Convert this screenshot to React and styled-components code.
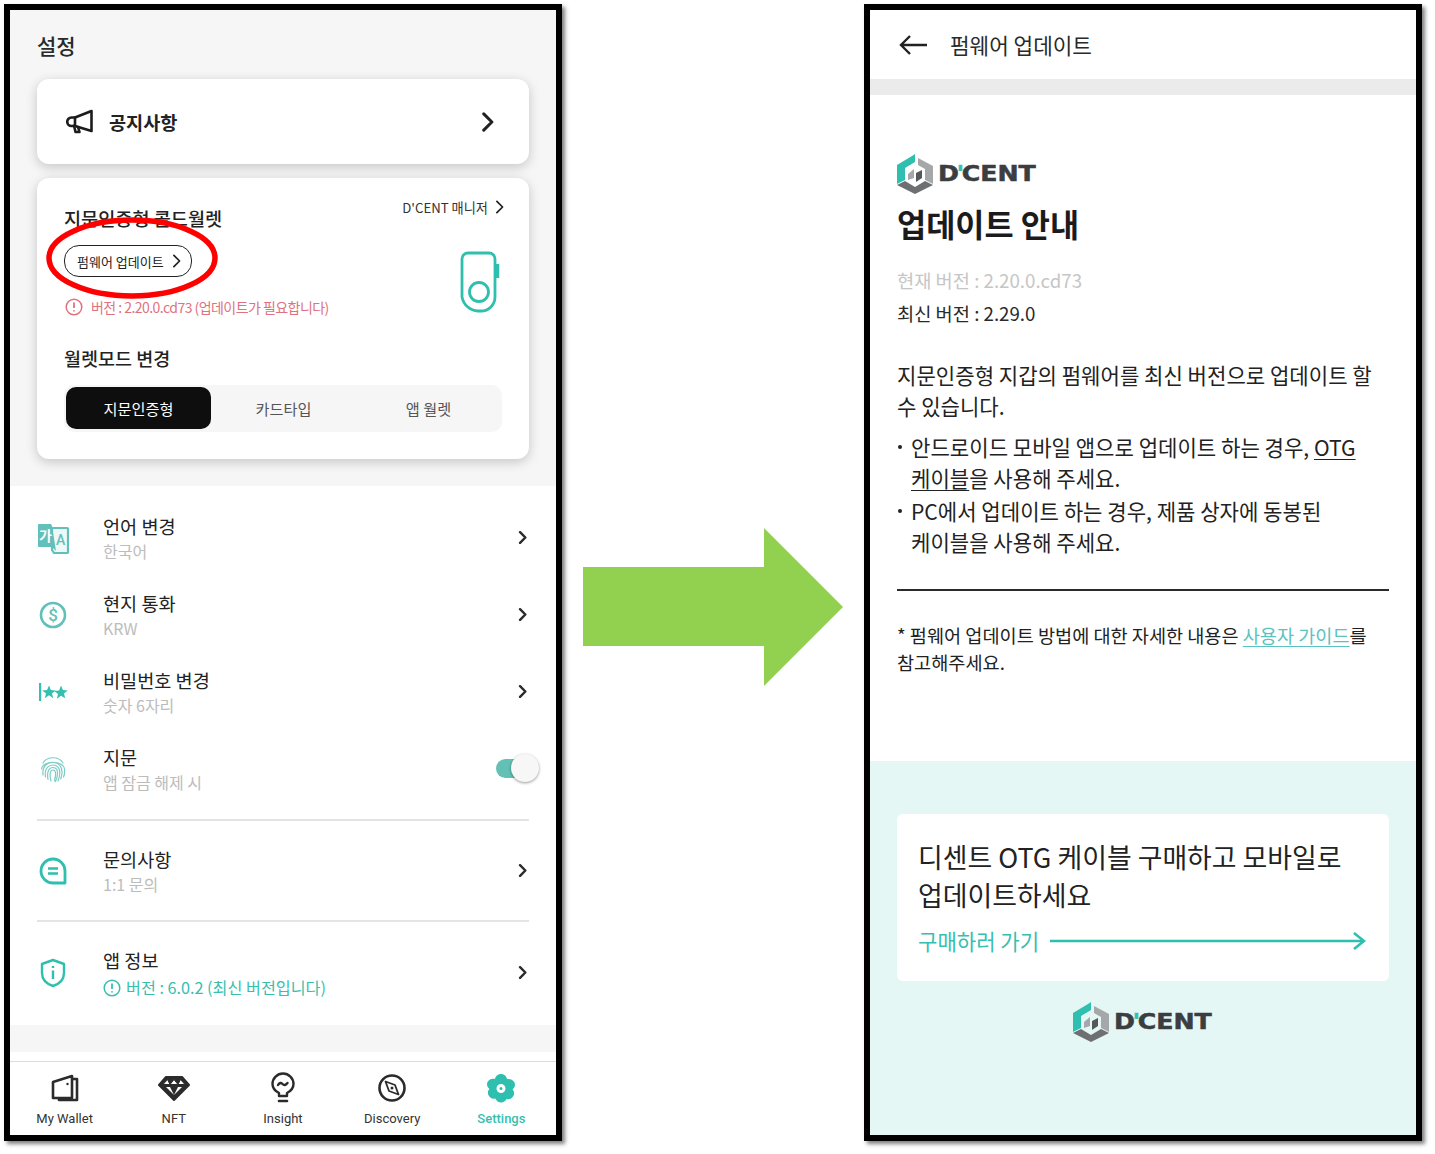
import React from "react";
import styled, { createGlobalStyle } from "styled-components";

const Global = createGlobalStyle`
  html, body { margin: 0; padding: 0; background: #fff; }
  body { font-family: "Noto Sans CJK KR", "Noto Sans", sans-serif; color: #1c1c1c; word-break: keep-all; }
  * { box-sizing: border-box; }
`;

const Page = styled.div`
  width: 1435px;
  height: 1154px;
  padding: 4px 0 0 4px;
  display: flex;
  align-items: flex-start;
  overflow: hidden;
`;

const Phone = styled.div`
  position: relative;
  width: 558px;
  height: 1137px;
  border: 6px solid #000;
  box-shadow: 3px 3px 4px rgba(0, 0, 0, 0.5);
  background: #fff;
  display: flex;
  flex-direction: column;
`;

const ArrowWrap = styled.div`
  width: 302px;
  padding: 524px 0 0 21px;
  svg { display: block; }
`;

/* left phone */
const TopArea = styled.div`
  height: 476px;
  background: #f6f6f6;
  padding: 0 27px;
  display: flex;
  flex-direction: column;
`;

const ScreenTitle = styled.div`
  height: 69px;
  padding: 20px 0 0 0;
  font-size: 21px;
  line-height: 30px;
  font-weight: 500;
  color: #2a2a2a;
`;

const Card = styled.div`
  background: #fff;
  border-radius: 12px;
  box-shadow: 0 3px 12px rgba(0, 0, 0, 0.2);
`;

const NoticeCard = styled(Card)`
  height: 85px;
  display: flex;
  align-items: center;
  padding: 0 35px 0 29px;
  margin-bottom: 14px;
`;

const NoticeLabel = styled.div`
  flex: 1;
  margin-left: 15px;
  font-size: 18.6px;
  font-weight: 700;
  color: #222;
`;

const WalletCard = styled(Card)`
  height: 281px;
  padding: 0 27px;
  display: flex;
  flex-direction: column;
`;

const WalletTop = styled.div`
  display: flex;
  justify-content: space-between;
  height: 69px;
`;

const WalletTitle = styled.div`
  font-size: 18.6px;
  line-height: 28px;
  font-weight: 500;
  padding-top: 26px;
  color: #222;
`;

const ManagerLink = styled.div`
  display: flex;
  align-items: center;
  gap: 7px;
  height: 20px;
  margin: 19px -2px 0 0;
  font-size: 13.2px;
  color: #333;
`;

const WalletMiddle = styled.div`
  display: flex;
  justify-content: space-between;
  height: 98px;
`;

const UpdateButton = styled.div`
  display: inline-flex;
  align-items: center;
  justify-content: space-between;
  width: 128px;
  height: 32px;
  padding: 0 10px 0 12px;
  border: 1.5px solid #222;
  border-radius: 15px;
  font-size: 13px;
  color: #222;
  background: #fff;
  margin-top: -2px;
`;

const Warning = styled.div`
  display: flex;
  align-items: center;
  gap: 8px;
  margin: 20px 0 0 1px;
  font-size: 14px;
  line-height: 20px;
  letter-spacing: -0.55px;
  color: #e0727f;
`;

const DeviceIcon = styled.svg`
  display: block;
  margin: 4px 1px 0 0;
`;

const ModeTitle = styled.div`
  font-size: 18.5px;
  line-height: 26px;
  font-weight: 500;
  color: #222;
`;

const ModeBar = styled.div`
  display: grid;
  grid-template-columns: repeat(3, 145px);
  width: 438px;
  height: 47px;
  margin-top: 14px;
  padding: 2px;
  background: #f6f6f6;
  border-radius: 10px;
`;

const ModeItem = styled.div`
  height: 42px;
  display: flex;
  align-items: center;
  justify-content: center;
  font-size: 15.2px;
  border-radius: 10px;
  color: ${(p) => (p.$active ? "#fff" : "#555")};
  background: ${(p) => (p.$active ? "#0e0e0e" : "transparent")};
`;

const RedRing = styled.svg`
  position: absolute;
  left: 36px;
  top: 207px;
  pointer-events: none;
`;

const List = styled.div`
  height: 539px;
  padding: 13px 27px 0 27px;
`;

const Row = styled.div`
  height: 77px;
  display: flex;
  align-items: center;
  margin-top: ${(p) => p.$gap || 0}px;
`;

const RowIcon = styled.div`
  width: 32px;
  height: 32px;
  display: flex;
  align-items: center;
  justify-content: center;
  margin-right: 34px;
`;

const RowText = styled.div`
  flex: 1;
  padding-top: 2px;
`;

const RowTitle = styled.div`
  font-size: 18.6px;
  line-height: 26px;
  color: #222;
`;

const RowSub = styled.div`
  display: flex;
  align-items: center;
  gap: 5px;
  margin-top: ${(p) => (p.$teal ? "2px" : "0")};
  font-size: ${(p) => (p.$teal ? "16.2px" : "16px")};
  line-height: 25px;
  color: ${(p) => (p.$teal ? "#36bfb0" : "#bcbcbc")};
`;

const RowArrow = styled.div`
  margin-right: 2px;
  display: flex;
`;

const Divider = styled.div`
  height: 2px;
  background: #e4e4e4;
  margin-top: ${(p) => p.$gap}px;
`;

const Toggle = styled.div`
  position: relative;
  width: 24px;
  height: 19px;
  margin: 0 9px 0 0;
  border-radius: 10px 0 0 10px;
  background: #62c0b5;
`;

const Knob = styled.div`
  position: absolute;
  left: 15px;
  top: -5px;
  width: 28px;
  height: 28px;
  border-radius: 50%;
  background: #f7f7f7;
  box-shadow: 0 1px 3px rgba(0, 0, 0, 0.4);
`;

const GrayGap = styled.div`
  height: 27px;
  background: #f6f6f6;
`;

const TabBar = styled.div`
  margin-top: 9px;
  border-top: 1px solid #dcdcdc;
  flex: 1;
  display: grid;
  grid-template-columns: repeat(5, 1fr);
`;

const Tab = styled.div`
  display: flex;
  flex-direction: column;
  align-items: center;
  padding-top: 10px;
  font-family: Roboto, "Liberation Sans", sans-serif;
  font-size: 13px;
  font-weight: ${(p) => (p.$active ? 500 : 400)};
  color: ${(p) => (p.$active ? "#36bfb0" : "#333")};
  svg { display: block; }
`;

const TabIcon = styled.div`
  height: 32px;
  display: flex;
  align-items: center;
`;

const TabLabel = styled.span`
  margin-top: 7px;
  line-height: 16px;
`;

/* right phone */
const AppBar = styled.div`
  height: 69px;
  display: flex;
  align-items: center;
  padding-left: 28px;
  gap: 22px;
  font-size: 21.3px;
  color: #2a2a2a;
`;

const Band = styled.div`
  height: 16px;
  background: #ebebeb;
`;

const Content = styled.div`
  height: 666px;
  padding: 59px 27px 0 27px;
`;

const LogoRow = styled.div`
  display: flex;
  align-items: center;
  justify-content: ${(p) => (p.$center ? "center" : "flex-start")};
  gap: 5px;
`;

const LogoText = styled.div`
  width: 99px;
  font-family: "DejaVu Sans", sans-serif;
  font-weight: 700;
  font-size: 20.5px;
  line-height: 24px;
  white-space: nowrap;
  color: #3b3e41;
  -webkit-text-stroke: 0.5px #3b3e41;
  transform: scaleX(1.23);
  transform-origin: left center;
  i { font-style: normal; color: #36bfb0; -webkit-text-stroke: 0.5px #36bfb0; margin: 0 -2px; }
`;

const MainTitle = styled.h1`
  margin: 6px 0 0 0;
  font-size: 31.7px;
  line-height: 46px;
  font-weight: 700;
  color: #1b1b1b;
`;

const Version = styled.div`
  font-size: 18.7px;
  line-height: 33px;
  color: ${(p) => (p.$muted ? "#c6c6c6" : "#2a2a2a")};
  margin-top: ${(p) => p.$gap || 0}px;
`;

const Para = styled.p`
  margin: 31px 0 10px 0;
  font-size: 21.1px;
  line-height: 31px;
  color: #222;
  width: 480px;
`;

const Bullets = styled.ul`
  margin: 0;
  padding: 0;
  list-style: none;
`;

const Bullet = styled.li`
  position: relative;
  padding-left: 14px;
  font-size: 21.1px;
  line-height: 31px;
  color: #222;
  margin-bottom: 2px;
  width: 470px;
  &::before {
    content: "";
    position: absolute;
    left: 1px;
    top: 13px;
    width: 4px;
    height: 4px;
    border-radius: 50%;
    background: #222;
  }
  u { text-underline-offset: 3px; text-decoration-thickness: 1px; }
`;

const Rule = styled.div`
  height: 2px;
  background: #2b2b2b;
  margin-top: 31px;
`;

const Note = styled.p`
  margin: 30px 0 0 0;
  font-size: 18.6px;
  line-height: 27px;
  color: #222;
  a { color: #5cc2c0; text-decoration: underline; text-underline-offset: 3px; text-decoration-thickness: 1px; }
`;

const Promo = styled.div`
  flex: 1;
  background: #e5f7f5;
  padding: 53px 27px 0 27px;
`;

const PromoCard = styled.div`
  height: 167px;
  background: #fff;
  border-radius: 6px;
  padding: 24px 21px 0 21px;
`;

const PromoText = styled.div`
  font-size: 26.9px;
  line-height: 38px;
  color: #222;
`;

const BuyRow = styled.div`
  display: flex;
  align-items: center;
  gap: 11px;
  margin-top: 12px;
  font-size: 21.1px;
  line-height: 30px;
  color: #36bfb0;
  svg { display: block; }
`;

const LogoFoot = styled.div`
  margin-top: 21px;
`;

const Chevron = ({ size = 12, weight = 2, color = "#222", height }) => (
  <svg width={size} height={height || size * 1.6} viewBox="0 0 10 16" fill="none">
    <path d="M2 1.5 8.5 8 2 14.5" stroke={color} strokeWidth={weight} strokeLinecap="round" strokeLinejoin="round" />
  </svg>
);

const Megaphone = () => (
  <svg width="28" height="26" viewBox="0 0 28 26" fill="none" stroke="#1c1c1c" strokeWidth="2.6" strokeLinejoin="round" strokeLinecap="round">
    <path d="M25.5 2 9 8.5H5.5a4 4 0 0 0 0 8.500H9L25.500 22Z" />
    <path d="M9 8.500v8M8 16.500l1.500 6.500h4l-1.500-5" />
  </svg>
);

const AlertCircle = ({ color, size = 18 }) => (
  <svg width={size} height={size} viewBox="0 0 18 18" fill="none" style={{ flex: "none" }}>
    <circle cx="9" cy="9" r="7.800" stroke={color} strokeWidth="1.500" />
    <path d="M9 4.500v5.500M9 12.300v1.200" stroke={color} strokeWidth="1.800" />
  </svg>
);

const Device = () => (
  <DeviceIcon width="42" height="62" viewBox="0 0 42 62" fill="none" stroke="#2fbfae" strokeWidth="2.800">
    <path d="M9 2h21a6 6 0 0 1 6 6v38a14 14 0 0 1-14 14h-3A17 17 0 0 1 3 46V8a6 6 0 0 1 6-6Z" />
    <circle cx="20" cy="41" r="9.500" />
    <path d="M38.500 13v14" strokeWidth="3.500" />
  </DeviceIcon>
);

const LangIcon = () => (
  <svg width="32" height="32" viewBox="0 0 32 32">
    <path d="M15 6h15a1 1 0 0 1 1 1v23a1 1 0 0 1-1 1H17l-2-3Z" fill="#eef8f7" stroke="#62c0bb" strokeWidth="2.200" />
    <path d="M1 3a1 1 0 0 1 1-1h12l1 2 4 25-4-4H2a1 1 0 0 1-1-1Z" fill="#62c0bb" />
    <text x="2" y="19" fontSize="14" fontWeight="700" fill="#fff" fontFamily="Noto Sans CJK KR">가</text>
    <text x="19" y="23" fontSize="14" fontWeight="500" fill="#62c0bb" fontFamily="Roboto">A</text>
  </svg>
);

const DollarIcon = () => (
  <svg width="28" height="28" viewBox="0 0 28 28" fill="none">
    <circle cx="14" cy="14" r="12" stroke="#62c0bb" strokeWidth="2.600" />
    <text x="14" y="20" textAnchor="middle" fontSize="17" fontWeight="500" fill="#62c0bb" fontFamily="Roboto">$</text>
  </svg>
);

const PinIcon = () => (
  <svg width="30" height="20" viewBox="0 0 30 20">
    <rect x="1" y="1" width="2.200" height="18" fill="#36bfb0" />
    <path fill="#36bfb0" d="M11 3.500l1.900 4.500 4.800.4-3.700 3.100 1.200 4.700L11 13.200l-4.200 3 1.200-4.700-3.700-3.100 4.800-.4ZM23 3.500l1.900 4.500 4.800.4-3.700 3.100 1.200 4.700-4.200-2.500-4.200 3 1.200-4.700-3.700-3.100 4.800-.4Z" />
  </svg>
);

const FingerIcon = () => (
  <svg width="26" height="28" viewBox="0 0 26 28" fill="none" stroke="#7cccc6" strokeWidth="1.200" strokeLinecap="round">
    <path d="M3 8C7 1 19 1 23 8" />
    <path d="M1.500 14C3 5 23 5 24.500 14c.4 3 0 6-1 8" />
    <path d="M3 20C2 10 8 7.500 13 7.500S22.500 11 22 18c-.2 2-.6 4-1.300 6" />
    <path d="M5.500 22C4 13 9 10 13 10s7 3 6.800 8c-.1 3-.7 5-1.800 8" />
    <path d="M8 24.500C6.500 16 9.500 12.500 13 12.500s4.800 3 4.500 6.500c-.2 2.500-.8 5-2 7.500" />
    <path d="M11 26c-1.500-5-1.500-11 2-11s3 5 1.500 11" />
  </svg>
);

const ChatIcon = () => (
  <svg width="28" height="28" viewBox="0 0 28 28" fill="none" stroke="#2fbfae">
    <path d="M14 2a12 12 0 0 1 12 12v12H14A12 12 0 0 1 14 2Z" strokeWidth="2.800" strokeLinejoin="round" />
    <path d="M9 11.500h10M9 16.500h10" strokeWidth="2.600" />
  </svg>
);

const ShieldIcon = () => (
  <svg width="26" height="30" viewBox="0 0 26 30" fill="none" stroke="#2fbfae">
    <path d="M13 2 24 6v9c0 7-5 11-11 13C7 26 2 22 2 15V6Z" strokeWidth="2.400" strokeLinejoin="round" />
    <path d="M13 12.500V21" strokeWidth="2.400" />
    <path d="M13 8v2" strokeWidth="2.400" />
  </svg>
);

const WalletIcon = () => (
  <svg width="30" height="30" viewBox="0 0 30 30" fill="none" stroke="#2b2b2b" strokeWidth="2.600" strokeLinejoin="round">
    <path d="M3 9 22 3v22H3Z" />
    <path d="M22 6h5v21H9v-2" />
    <circle cx="17.500" cy="11" r="1.200" fill="#2b2b2b" stroke="none" />
  </svg>
);

const GemIcon = () => (
  <svg width="32" height="30" viewBox="0 0 32 30" fill="none" stroke="#2b2b2b" strokeWidth="2" strokeLinejoin="round">
    <path d="M8 4h16l7 8-15 15L1 12Z" fill="#2b2b2b" />
    <path d="M5 11.500 9.500 6.500 12 11.500 16 6.500 20 11.500 22.500 6.500 27 11.500Z" fill="#fff" stroke="#2b2b2b" strokeWidth="1" />
    <path d="M8 14h4l4 8Zm16 0h-4l-4 8Z" fill="#fff" stroke="none" />
  </svg>
);

const BulbIcon = () => (
  <svg width="30" height="32" viewBox="0 0 30 32" fill="none" stroke="#2b2b2b" strokeWidth="2.400" strokeLinecap="round">
    <path d="M11 24v-3C7 19 4.500 16 4.500 12a10.500 10.500 0 0 1 21 0c0 4-2.500 7-6.500 9v3Z" strokeLinejoin="round" />
    <path d="M11 29h8" strokeWidth="2.600" />
    <path d="M10 13c1.500-2.500 3-2.500 4.500-1s3 1.500 5-1" />
  </svg>
);

const CompassIcon = () => (
  <svg width="30" height="30" viewBox="0 0 30 30" fill="none" stroke="#2b2b2b" strokeWidth="2.600">
    <circle cx="15" cy="15" r="12.500" />
    <path d="M8.500 8.500 18 12l3.500 9.500L12 18Z" strokeWidth="1.800" strokeLinejoin="round" />
    <circle cx="15" cy="15" r="1.500" fill="#2b2b2b" stroke="none" />
  </svg>
);

const GearIcon = () => (
  <svg width="30" height="30" viewBox="0 0 30 30">
    <path
      fill="#2fbfae"
      fillRule="evenodd"
      d="M15 1c3.500 0 5.500 2.500 6 5 2.500-.5 6 .5 7.500 3.500 1.300 3-.2 5.500-2 7 1.800 1.500 2.300 4.500.5 7-1.800 2.800-4.500 3-6.500 2.500C19.500 28 17.500 29.500 15 29.500S10.500 28 9.500 25.500C7.500 26 4.800 25.800 3 23c-1.800-2.500-1.300-5.500.5-7-1.800-1.500-3.300-4-2-7C3 6 6.500 5 9 6c.5-2.500 2.500-5 6-5ZM15 11a4.500 4.500 0 1 0 0 9 4.500 4.500 0 0 0 0-9Zm0 3a1.500 1.500 0 1 1 0 3 1.500 1.500 0 0 1 0-3Z"
    />
  </svg>
);

const LogoMark = () => (
  <svg width="36" height="40" viewBox="0 0 36 40">
    <path d="M0 11 15 2l3-2v8L8 14v12l-8 4Z" fill="#2fbfae" />
    <path d="M21 4l15 8v18l-8-4V15l-7-4Z" fill="#a5a7a9" />
    <path d="M0 31l8-4 10 6 10-6 8 4-18 9Z" fill="#6d6f72" />
    <path d="M11 20l6-5v9l-6 2Z" fill="#a5a7a9" />
    <path d="M19 19l6-3v8l-6 4Z" fill="#55585b" />
  </svg>
);

const Logo = ({ center }) => (
  <LogoRow $center={center}>
    <LogoMark />
    <LogoText>D<i>'</i>CENT</LogoText>
  </LogoRow>
);

const settings = [
  { icon: <LangIcon />, title: "언어 변경", sub: "한국어" },
  { icon: <DollarIcon />, title: "현지 통화", sub: "KRW" },
  { icon: <PinIcon />, title: "비밀번호 변경", sub: "숫자 6자리" },
];

const tabs = [
  { icon: <WalletIcon />, label: "My Wallet" },
  { icon: <GemIcon />, label: "NFT" },
  { icon: <BulbIcon />, label: "Insight" },
  { icon: <CompassIcon />, label: "Discovery" },
  { icon: <GearIcon />, label: "Settings", active: true },
];

const RowChevron = () => (
  <RowArrow>
    <Chevron size={9} height={13} weight={3} color="#2b2b2b" />
  </RowArrow>
);

const SettingsScreen = () => (
  <Phone>
    <TopArea>
      <ScreenTitle>설정</ScreenTitle>
      <NoticeCard>
        <Megaphone />
        <NoticeLabel>공지사항</NoticeLabel>
        <Chevron size={13} height={20} weight={2.400} />
      </NoticeCard>
      <WalletCard>
        <WalletTop>
          <WalletTitle>지문인증형 콜드월렛</WalletTitle>
          <ManagerLink>
            D'CENT 매니저
            <Chevron size={9} height={14} weight={2} />
          </ManagerLink>
        </WalletTop>
        <WalletMiddle>
          <div>
            <UpdateButton>
              펌웨어 업데이트
              <Chevron size={9} height={14} weight={2} />
            </UpdateButton>
            <Warning>
              <AlertCircle color="#e0727f" />
              버전 : 2.20.0.cd73 (업데이트가 필요합니다)
            </Warning>
          </div>
          <Device />
        </WalletMiddle>
        <ModeTitle>월렛모드 변경</ModeTitle>
        <ModeBar>
          <ModeItem $active>지문인증형</ModeItem>
          <ModeItem>카드타입</ModeItem>
          <ModeItem>앱 월렛</ModeItem>
        </ModeBar>
      </WalletCard>
    </TopArea>
    <RedRing width="172" height="82" viewBox="0 0 172 82" fill="none">
      <ellipse cx="86" cy="41" rx="83" ry="38" stroke="#f00" strokeWidth="5.500" />
    </RedRing>
    <List>
      {settings.map((s) => (
        <Row key={s.title}>
          <RowIcon>{s.icon}</RowIcon>
          <RowText>
            <RowTitle>{s.title}</RowTitle>
            <RowSub>{s.sub}</RowSub>
          </RowText>
          <RowChevron />
        </Row>
      ))}
      <Row>
        <RowIcon><FingerIcon /></RowIcon>
        <RowText>
          <RowTitle>지문</RowTitle>
          <RowSub>앱 잠금 해제 시</RowSub>
        </RowText>
        <Toggle><Knob /></Toggle>
      </Row>
      <Divider $gap={12} />
      <Row $gap={11}>
        <RowIcon><ChatIcon /></RowIcon>
        <RowText>
          <RowTitle>문의사항</RowTitle>
          <RowSub>1:1 문의</RowSub>
        </RowText>
        <RowChevron />
      </Row>
      <Divider $gap={11} />
      <Row $gap={12}>
        <RowIcon><ShieldIcon /></RowIcon>
        <RowText>
          <RowTitle>앱 정보</RowTitle>
          <RowSub $teal>
            <AlertCircle color="#36bfb0" />
            버전 : 6.0.2 (최신 버전입니다)
          </RowSub>
        </RowText>
        <RowChevron />
      </Row>
    </List>
    <GrayGap />
    <TabBar>
      {tabs.map((t) => (
        <Tab key={t.label} $active={t.active}>
          <TabIcon>{t.icon}</TabIcon>
          <TabLabel>{t.label}</TabLabel>
        </Tab>
      ))}
    </TabBar>
  </Phone>
);

const UpdateScreen = () => (
  <Phone>
    <AppBar>
      <svg width="30" height="22" viewBox="0 0 30 22" fill="none" stroke="#222" strokeWidth="2.400">
        <path d="M29 11H3M12 2 3 11l9 9" />
      </svg>
      펌웨어 업데이트
    </AppBar>
    <Band />
    <Content>
      <Logo />
      <MainTitle>업데이트 안내</MainTitle>
      <Version $muted $gap={17}>현재 버전 : 2.20.0.cd73</Version>
      <Version>최신 버전 : 2.29.0</Version>
      <Para>지문인증형 지갑의 펌웨어를 최신 버전으로 업데이트 할 수 있습니다.</Para>
      <Bullets>
        <Bullet>안드로이드 모바일 앱으로 업데이트 하는 경우, <u>OTG 케이블</u>을 사용해 주세요.</Bullet>
        <Bullet>PC에서 업데이트 하는 경우, 제품 상자에 동봉된 케이블을 사용해 주세요.</Bullet>
      </Bullets>
      <Rule />
      <Note>
        * 펌웨어 업데이트 방법에 대한 자세한 내용은 <a>사용자 가이드</a>를 참고해주세요.
      </Note>
    </Content>
    <Promo>
      <PromoCard>
        <PromoText>디센트 OTG 케이블 구매하고 모바일로 업데이트하세요</PromoText>
        <BuyRow>
          구매하러 가기
          <svg width="316" height="20" viewBox="0 0 316 20" fill="none" stroke="#2fbfae" strokeWidth="2.600">
            <path d="M0 10h314M304 2l10 8-10 8" />
          </svg>
        </BuyRow>
      </PromoCard>
      <LogoFoot>
        <Logo center />
      </LogoFoot>
    </Promo>
  </Phone>
);

export default function App() {
  return (
    <Page>
      <Global />
      <SettingsScreen />
      <ArrowWrap>
        <svg width="262" height="158" viewBox="0 0 262 158">
          <path d="M0 39h181V0l79 79-79 79v-40H0Z" fill="#92d050" />
        </svg>
      </ArrowWrap>
      <UpdateScreen />
    </Page>
  );
}
